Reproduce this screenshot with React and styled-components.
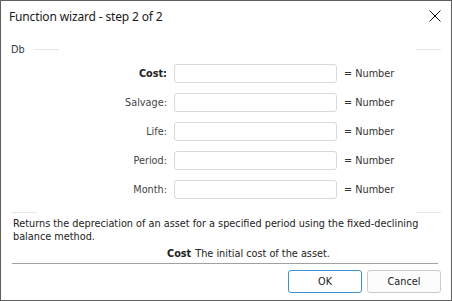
import styled, { createGlobalStyle } from "styled-components";

const GlobalStyle = createGlobalStyle`
  html, body {
    margin: 0;
    padding: 0;
    background: #ffffff;
  }
  * {
    box-sizing: border-box;
  }
`;

const Window = styled.div`
  width: 452px;
  height: 301px;
  border: 1px solid #5f5f5f;
  background: #ffffff;
  display: flex;
  flex-direction: column;
  font-family: "DejaVu Sans Condensed", "DejaVu Sans", Tahoma, sans-serif;
  font-size: 10.8px;
  color: #222;
`;

const TitleBar = styled.div`
  height: 30px;
  display: flex;
  align-items: center;
  justify-content: space-between;
  padding: 0 8px 0 8px;
`;

const Title = styled.span`
  font-family: "Noto Sans", "Open Sans", sans-serif;
  font-size: 12px;
  letter-spacing: -0.15px;
  color: #1a1a1a;
`;

const CloseButton = styled.button`
  border: none;
  background: transparent;
  padding: 0;
  width: 16px;
  height: 16px;
  display: flex;
  align-items: center;
  justify-content: center;
  margin-right: 0;
`;

const GroupHeader = styled.div`
  display: flex;
  align-items: center;
  height: 10px;
  margin-top: ${(p) => p.top || 0}px;
  padding: 0 10px 0 10px;
  color: #333a4a;
`;

const HeaderLine = styled.div`
  width: 25px;
  height: 1px;
  background: #e6e6e6;
  margin-left: ${(p) => p.left || 0}px;
`;

const Spacer = styled.div`
  flex: 1;
`;

const Fields = styled.div`
  display: flex;
  flex-direction: column;
  gap: 10px;
  margin-top: 10px;
`;

const Row = styled.div`
  display: grid;
  grid-template-columns: 166px 163px auto;
  column-gap: 7px;
  align-items: center;
  height: 19px;
`;

const Label = styled.label`
  text-align: right;
  font-weight: ${(p) => (p.bold ? 700 : 400)};
  color: ${(p) => (p.bold ? "#222" : "#444")};
`;

const Input = styled.input`
  height: 19px;
  border: 1px solid #d9d9d9;
  border-radius: 3px;
  background: #fff;
  padding: 0 4px;
  font: inherit;
  outline: none;
`;

const TypeHint = styled.span`
  color: #333;
`;

const Description = styled.p`
  margin: 0 0 0 0;
  padding: 0 12px;
  line-height: 13px;
  color: #222;
`;

const ArgHelp = styled.div`
  padding-left: 166px;
  margin-top: 4px;
  line-height: 13px;
  color: #222;
`;

const Strong = styled.b`
  font-weight: 700;
  margin-right: 4px;
`;

const Divider = styled.div`
  height: 1px;
  background: #a0a0a0;
  margin: 3px 13px 0 11px;
`;

const Footer = styled.div`
  display: flex;
  justify-content: flex-end;
  gap: 5px;
  padding: 6px 10px 0 0;
`;

const Button = styled.button`
  width: 74px;
  height: 23px;
  border: 1px solid ${(p) => (p.primary ? "#3d8fd6" : "#cccccc")};
  border-radius: 3px;
  background: ${(p) => (p.primary ? "#ffffff" : "#fcfcfc")};
  font-family: "DejaVu Sans Condensed", "DejaVu Sans", Tahoma, sans-serif;
  font-size: 10.8px;
  color: #222;
  padding: 0;
`;

const fields = [
  { name: "Cost", bold: true },
  { name: "Salvage" },
  { name: "Life" },
  { name: "Period" },
  { name: "Month" },
];

export default function App() {
  return (
    <>
      <GlobalStyle />
      <Window>
        <TitleBar>
          <Title>Function wizard - step 2 of 2</Title>
          <CloseButton aria-label="Close">
            <svg width="12" height="12" viewBox="0 0 12 12">
              <path d="M0.5 0.5 L11.5 11.5 M11.5 0.5 L0.5 11.5" stroke="#1a1a1a" strokeWidth="1" />
            </svg>
          </CloseButton>
        </TitleBar>
        <GroupHeader top={13}>
          <span>Db</span>
          <HeaderLine left={9} />
          <Spacer />
          <HeaderLine />
        </GroupHeader>
        <Fields>
          {fields.map((f) => (
            <Row key={f.name}>
              <Label bold={f.bold}>{f.name}:</Label>
              <Input />
              <TypeHint>= Number</TypeHint>
            </Row>
          ))}
        </Fields>
        <GroupHeader top={8}>
          <HeaderLine left={1} />
          <Spacer />
          <HeaderLine />
        </GroupHeader>
        <Description>
          Returns the depreciation of an asset for a specified period using the fixed-declining balance method.
        </Description>
        <ArgHelp>
          <Strong>Cost</Strong>The initial cost of the asset.
        </ArgHelp>
        <Divider />
        <Footer>
          <Button primary>OK</Button>
          <Button>Cancel</Button>
        </Footer>
      </Window>
    </>
  );
}
